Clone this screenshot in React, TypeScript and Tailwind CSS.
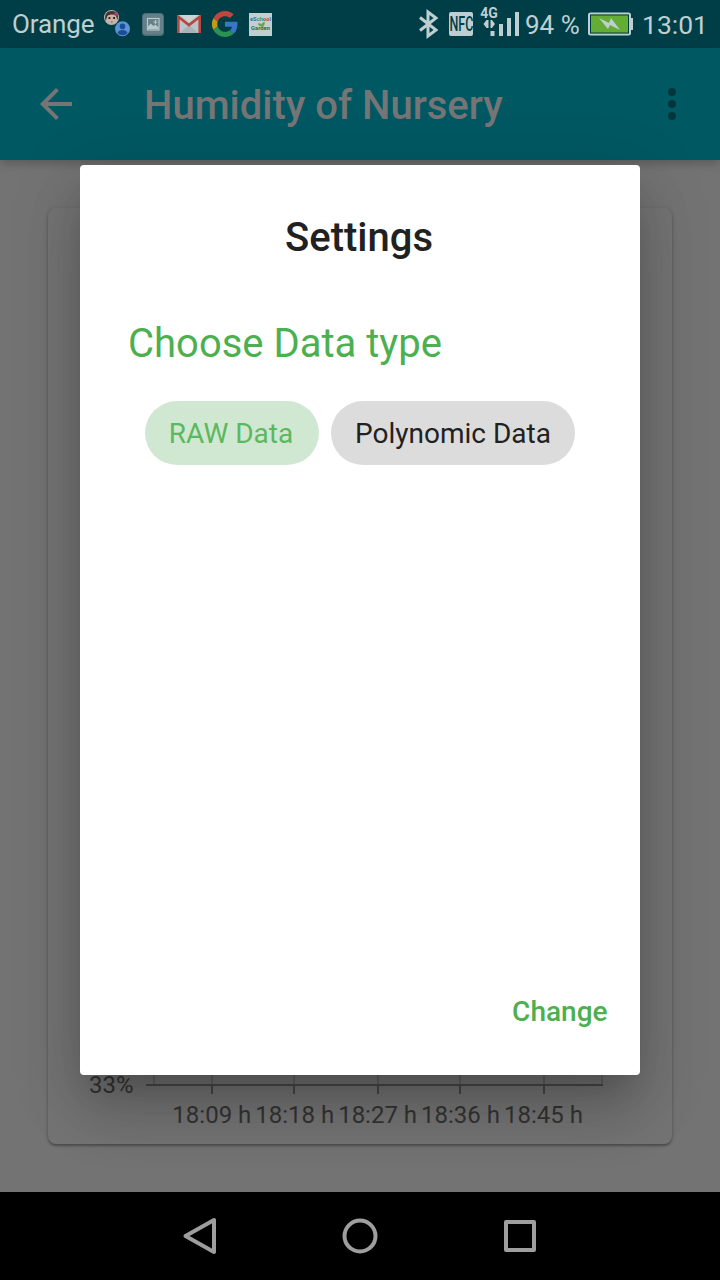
import React from "react";

const times = ["18:09 h", "18:18 h", "18:27 h", "18:36 h", "18:45 h"];
const ticks = [212, 294, 378, 460, 544];

function AvatarIcon() {
  return (
    <svg width="26" height="28" viewBox="0 0 26 28">
      <circle cx="7.5" cy="7.5" r="7.5" fill="#bdb4ae" />
      <path d="M1.500 11C0 4 3 1 8 1c5 0 7 4 5.500 9L12 6C9 5 6 5 3.500 6z" fill="#4a3230" />
      <path d="M3.500 6c2-2 7-2 8.500 0v4c-1 3-2.500 4-4.200 4S4.500 12.500 3.500 10z" fill="#cbb3a6" />
      <path d="M4.500 8h1.800M9.200 8H11" stroke="#2b1e1e" strokeWidth="1.800" />
      <path d="M6.900 12h1.800" stroke="#8a5550" />
      <circle cx="12" cy="4" r="1.800" fill="#a9427c" />
      <circle cx="18.5" cy="18.8" r="7.5" fill="#5c94d6" />
      <circle cx="18.5" cy="16.4" r="2.8" fill="#1b4e98" />
      <path d="M13.500 23c.5-4 9.500-4 10 0-2.500 3-7.500 3-10 0z" fill="#1b4e98" />
    </svg>
  );
}

function PictureIcon() {
  return (
    <svg width="22" height="23" viewBox="0 0 22 23">
      <rect width="22" height="23" rx="4" fill="#4f6f78" />
      <rect x="1" y="1" width="20" height="20.500" rx="3" fill="#647f87" />
      <rect x="5.500" y="5.500" width="11.500" height="11.500" fill="none" stroke="#b7c8cb" strokeWidth="1.200" />
      <path d="M6 16v-2.500l2.800-3 2.700 2.500 2-1.500 3 3V16z" fill="#b7c8cb" />
      <path d="M13.500 7v4M11.500 9h4" stroke="#b7c8cb" strokeWidth="1.200" />
    </svg>
  );
}

function GmailIcon() {
  return (
    <svg width="24" height="18" viewBox="0 0 24 18">
      <rect width="24" height="18" rx="1.500" fill="#b9c5c7" />
      <path d="M3 18l9-8 9 8z" fill="#a7b3b6" />
      <path d="M3 0h18l-9 7.500z" fill="#cbd5d6" />
      <path d="M1.300 18V1.800L12 10 22.700 1.800V18" fill="none" stroke="#b8453f" strokeWidth="2.600" />
    </svg>
  );
}

function GoogleIcon() {
  return (
    <svg width="26" height="26" viewBox="0 0 48 48">
      <path fill="#c0473d" d="M24 9.500c3.500 0 6.700 1.200 9.200 3.600l6.900-6.900C35.900 2.400 30.500 0 24 0 14.600 0 6.500 5.400 2.600 13.200l8 6.200C12.400 13.700 17.700 9.500 24 9.500z" />
      <path fill="#3a76c4" d="M47 24.600c0-1.600-.2-3.100-.4-4.600H24v9h12.900c-.6 3-2.200 5.500-4.700 7.200l7.700 6C44.400 38 47 31.800 47 24.600z" />
      <path fill="#c29a17" d="M10.500 28.600a14.500 14.500 0 010-9.200l-8-6.200a24 24 0 000 21.600z" />
      <path fill="#2c9253" d="M24 48c6.500 0 11.900-2.100 15.900-5.800l-7.700-6c-2.200 1.500-4.900 2.300-8.200 2.300-6.300 0-11.600-4.200-13.500-9.900l-8 6.200C6.500 42.600 14.600 48 24 48z" />
    </svg>
  );
}

function GardenIcon() {
  return (
    <div className="relative flex h-[23px] w-[23px] flex-col items-center justify-center bg-[#c3ced0] text-[5.8px] leading-[9px] font-bold">
      <span className="text-[#28749b]">
        eS<span className="text-[#35936a]">ch</span><span className="text-[#b4473f]">oo</span>l
      </span>
      <span className="text-[#356d35]">Garden</span>
      <svg className="absolute top-[9px] left-[9px]" width="7" height="7" viewBox="0 0 7 7">
        <path d="M3.500 6.500V4C1 4 .5 3 .5 1.500 2.500 1.500 3.500 2.500 3.500 4 3.500 2 4.500.5 6.500.5 6.500 3 5.500 4 3.500 4" fill="#5ea345" stroke="#5ea345" strokeWidth=".6" />
      </svg>
    </div>
  );
}

function StatusBar() {
  return (
    <div className="flex h-12 items-center bg-[#003e47] text-[#bfcfd1]">
      <span className="ml-3 w-[92px] text-[26px] tracking-[-0.1px]">Orange</span>
      <AvatarIcon />
      <div className="ml-[12px]"><PictureIcon /></div>
      <div className="ml-[13px]"><GmailIcon /></div>
      <div className="ml-[11px]"><GoogleIcon /></div>
      <div className="ml-[11px]"><GardenIcon /></div>
      <svg className="ml-auto" width="106" height="40" viewBox="414 4 106 40">
        <path d="M420 17.500L436 30 428 36V12L436 18 420 30.500" fill="none" stroke="#bfcfd1" strokeWidth="3" />
        <rect x="449" y="12" width="24" height="24" rx="2" fill="#bfcfd1" />
        <text transform="translate(449.500 31) scale(.64 1)" fontSize="19.500" fontWeight="500" fill="#003e47">NFC</text>
        <text x="480.300" y="18" fontSize="14" fontWeight="700" fill="#bfcfd1">4G</text>
        <path d="M483.500 24l3-4h2v8h-2zM495 24l-3-4h-1.500v8h1.500z" fill="#bfcfd1" />
        <path d="M490.500 31h4v5h-4zM499 24h4v12h-4zM507 18h4v18h-4zM515 12h4v24h-4z" fill="#bfcfd1" />
      </svg>
      <span className="relative top-px ml-[5px] w-[63px] text-[26px] whitespace-nowrap">94 %</span>
      <svg width="46" height="24" viewBox="0 0 46 24">
        <rect x="1" y="1.500" width="41" height="21" rx="1.500" fill="#64ad34" stroke="#bfcfd1" strokeWidth="2" />
        <rect x="2.500" y="3" width="38" height="18" fill="none" stroke="#003e47" />
        <path d="M43 6h2v12h-2z" fill="#bfcfd1" />
        <path d="M11 6l10 5 2-5 9 12-10-5-2 4z" fill="#bfcfd1" />
      </svg>
      <span className="relative top-px mr-3 ml-[8px] w-[66px] text-[26.5px] whitespace-nowrap">13:01</span>
    </div>
  );
}

function AppBar() {
  return (
    <div className="relative flex h-28 items-center bg-[#005862] shadow-[0_4px_8px_-2px_rgba(0,0,0,0.15),0_4px_10px_rgba(0,0,0,0.1)]">
      <svg className="ml-8" width="48" height="48" viewBox="0 0 24 24" fill="#757575">
        <path d="M20 11H7.830l5.590-5.590L12 4l-8 8 8 8 1.410-1.410L7.830 13H20v-2z" />
      </svg>
      <h1 className="mt-[3px] ml-16 text-[40px] leading-[48px] font-medium text-[#757575]">Humidity of Nursery</h1>
      <svg className="mr-6 ml-auto" width="48" height="48" viewBox="0 0 48 48" fill="#00363c">
        <circle cx="24" cy="12" r="4" />
        <circle cx="24" cy="24" r="4" />
        <circle cx="24" cy="36" r="4" />
      </svg>
    </div>
  );
}

function ChartCard() {
  return (
    <div className="m-12 flex h-[936px] flex-col justify-end rounded-lg bg-[#747474] shadow-[0_2px_2px_rgba(0,0,0,0.25),0_1px_4px_rgba(0,0,0,0.15)]">
      <div className="flex h-[26px] items-start text-2xl leading-[24px] text-[#333]">
        <span className="ml-[41px] w-[57px]">33%</span>
        <svg width="458" height="24" viewBox="146 1073 458 24">
          <path d="M154 1073v12M212 1073v12M294 1073v12M378 1073v12M460 1073v12M544 1073v12M602 1073v12" stroke="#636363" strokeWidth="2" />
          <path d="M146 1085h457" stroke="#484848" strokeWidth="2" />
          <path d={ticks.map((x) => `M${x} 1085v9`).join("")} stroke="#484848" strokeWidth="2" />
        </svg>
      </div>
      <div className="mb-[14px] flex h-[31px] pt-px pl-[122.4px] text-2xl leading-[30px] whitespace-nowrap text-[#333]">
        {times.map((t) => (
          <span key={t} className="w-[82.9px] text-center">{t}</span>
        ))}
      </div>
    </div>
  );
}

function SettingsDialog() {
  return (
    <div role="dialog" className="absolute top-[165px] left-20 flex h-[910px] w-[560px] flex-col rounded bg-white shadow-[0_22px_30px_-14px_rgba(0,0,0,0.18),0_40px_60px_0px_rgba(0,0,0,0.14),0_18px_70px_8px_rgba(0,0,0,0.1)]">
      <h2 className="mt-[49px] mr-[2px] text-center text-[40px] leading-[48px] font-medium text-[#212121]">Settings</h2>
      <p className="mt-[58px] ml-12 text-[40px] leading-[48px] text-[#4caf50]">Choose Data type</p>
      <div className="mt-[33px] flex justify-center gap-3 text-[28px]">
        <button className="h-16 w-[174px] rounded-full bg-[#d0e8d2] pt-[2px] pr-[2px] text-[#5cb860]">RAW Data</button>
        <button className="h-16 w-[244px] rounded-full bg-[#dcdcdc] pt-[2px] text-[#212121]">Polynomic Data</button>
      </div>
      <button className="mt-auto mr-[32.5px] mb-[43px] self-end text-[28px] leading-[40px] font-medium text-[#4caf50]">Change</button>
    </div>
  );
}

function NavBar() {
  return (
    <div className="relative flex h-[88px] items-center justify-center gap-[112px] bg-black">
      {["M38 8v32L9.500 24z", "M24 8.500a15.500 15.500 0 100 31 15.500 15.500 0 100-31z", "M10 10h28v28H10z"].map((d) => (
        <svg key={d} width="48" height="48" viewBox="0 0 48 48" fill="none" stroke="#9e9e9e" strokeWidth="4" strokeLinejoin="round">
          <path d={d} />
        </svg>
      ))}
    </div>
  );
}

export default function App() {
  return (
    <div className="relative flex h-[1280px] w-[720px] flex-col overflow-hidden bg-[#737373] font-[Roboto,sans-serif]">
      <div className="flex h-[1192px] flex-col overflow-hidden">
        <StatusBar />
        <AppBar />
        <ChartCard />
        <SettingsDialog />
      </div>
      <NavBar />
    </div>
  );
}
